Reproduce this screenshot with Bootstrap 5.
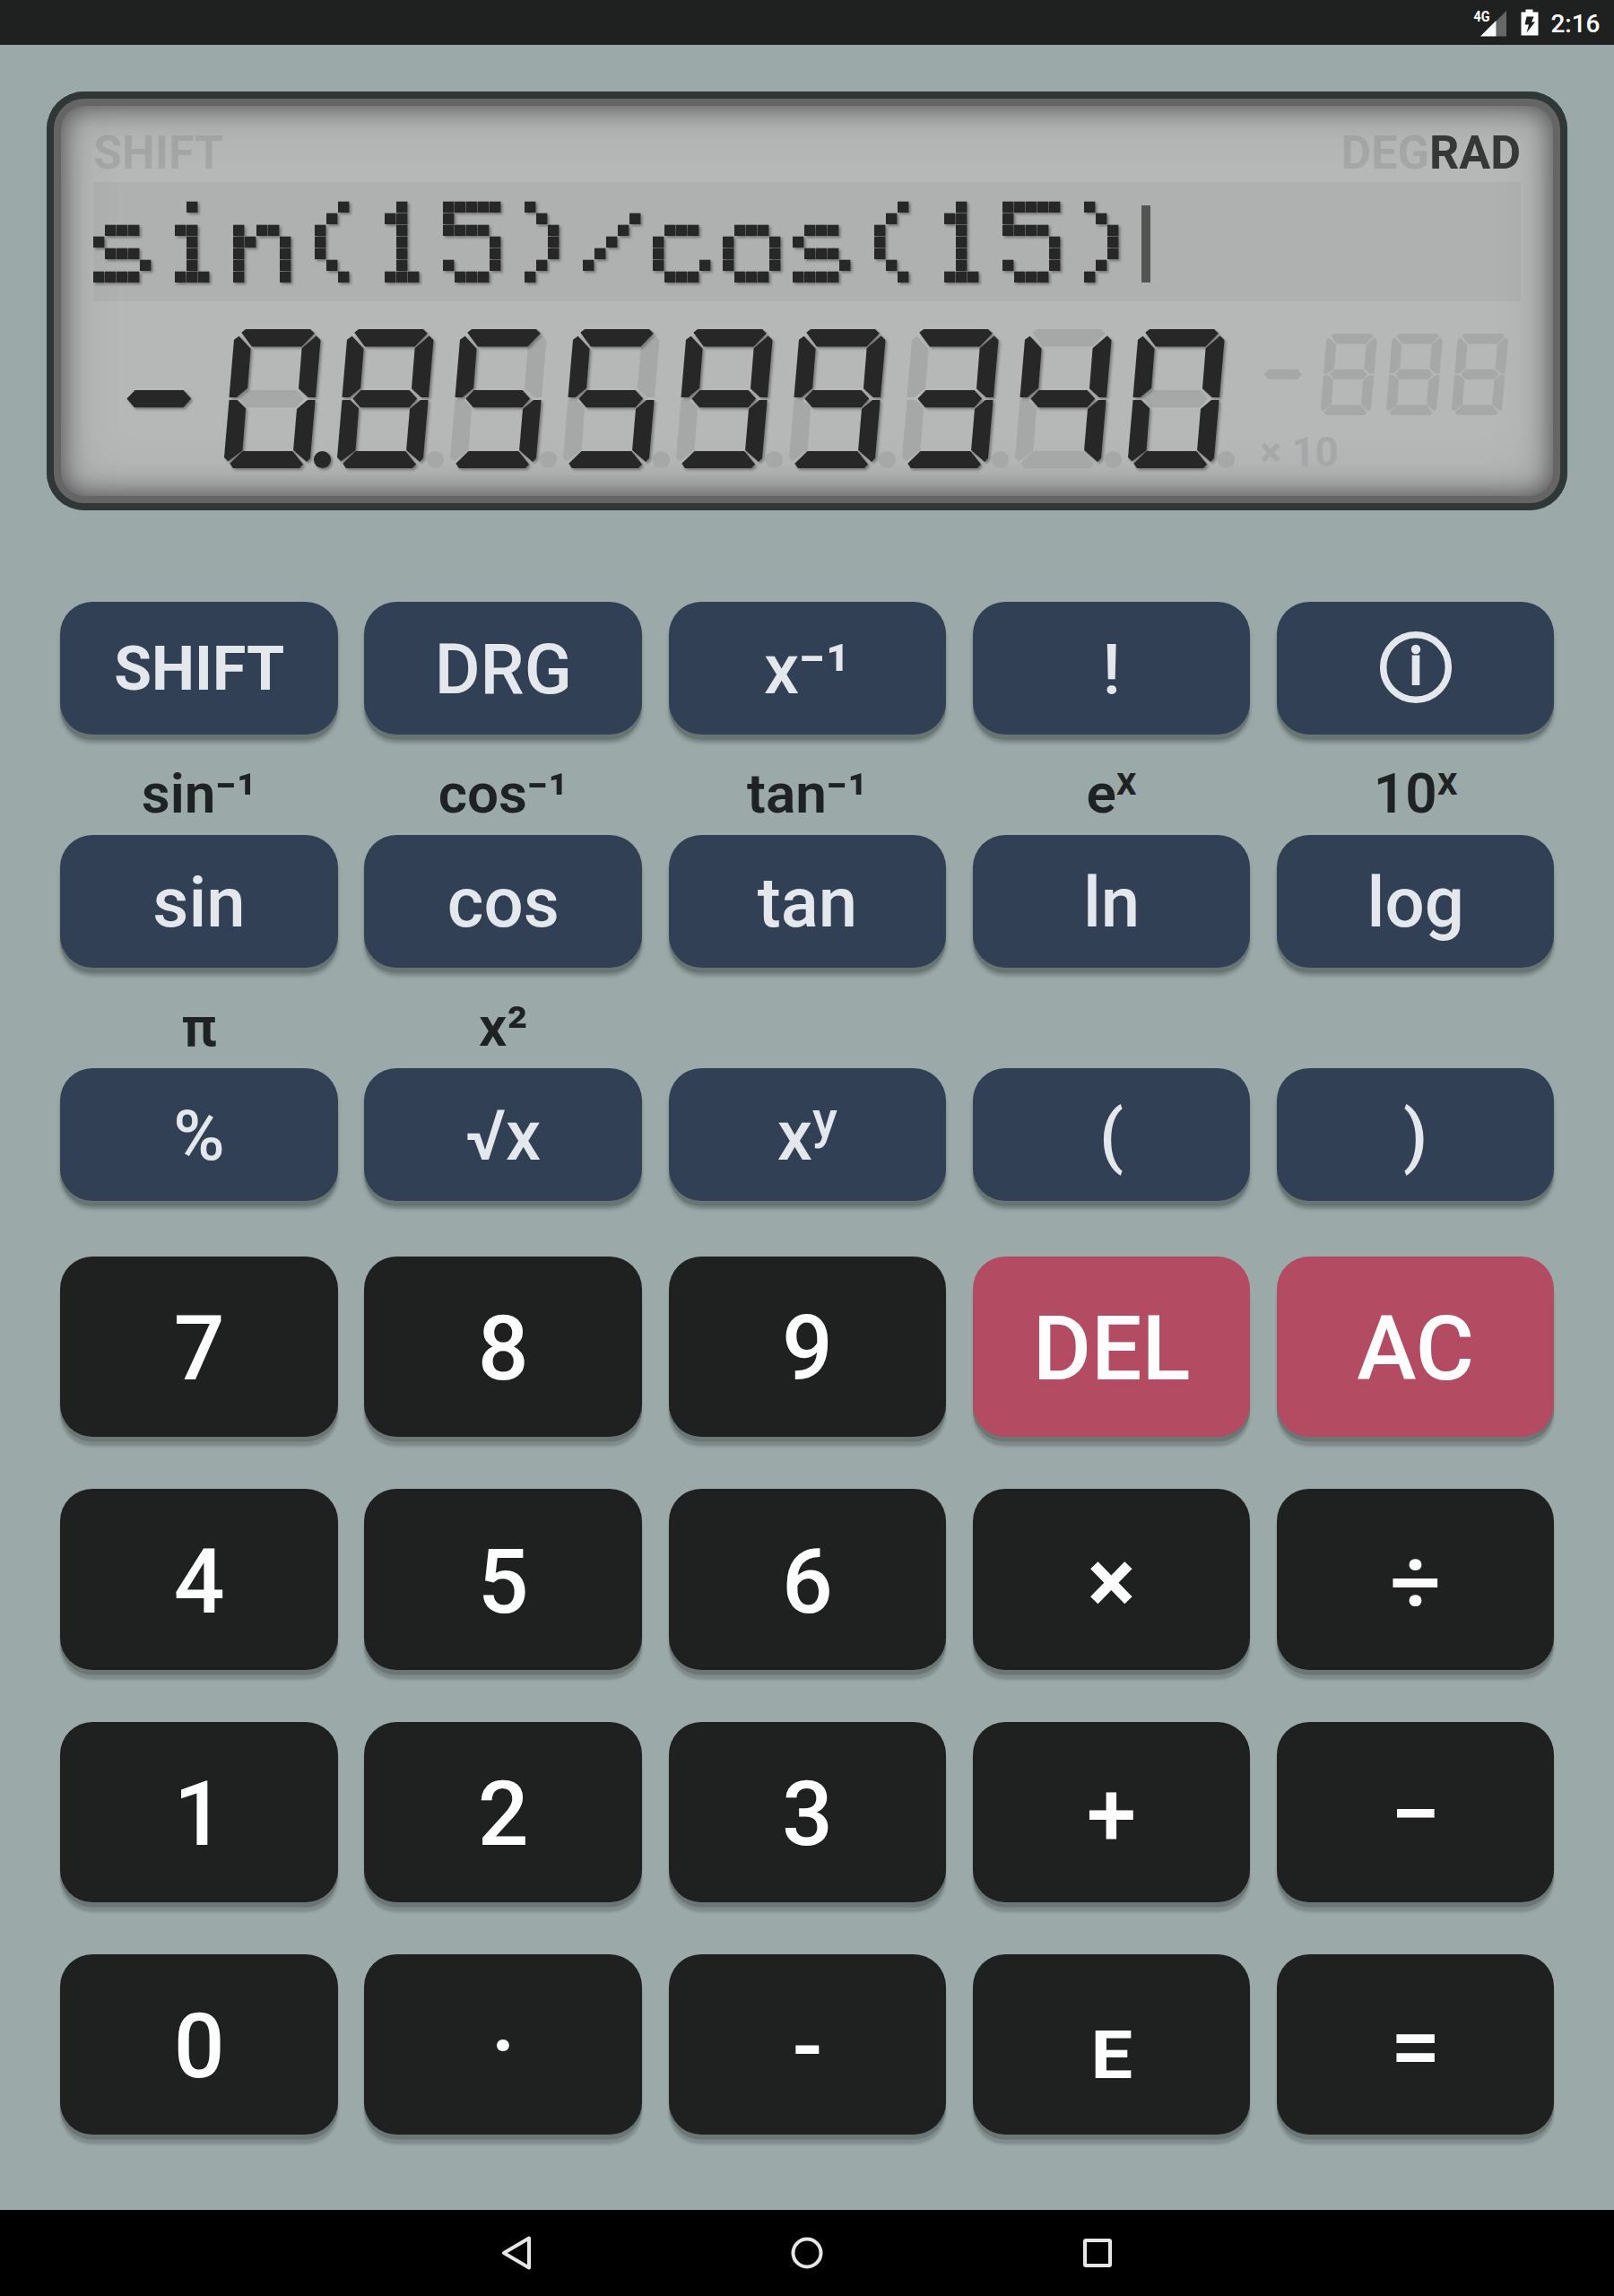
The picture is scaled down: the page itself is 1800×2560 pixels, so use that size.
<!DOCTYPE html>
<html lang="en">
<head>
<meta charset="utf-8">
<meta name="viewport" content="width=device-width, initial-scale=1">
<title>Calculator</title>
<link href="https://cdn.jsdelivr.net/npm/bootstrap@5.3.0/dist/css/bootstrap.min.css" rel="stylesheet">
<style>
  body { width: 1800px; height: 2560px; background: #9baaa9; font-family: Roboto, "Noto Sans", sans-serif; overflow: hidden; }
  .status-strip { height: 50px; background: #1f2120; color: #fff; }
  .clock { font-size: 28px; font-weight: 500; line-height: 50px; margin: 3px 15.5px 0 0; }
  .lcd { margin: 52px 52px 0; height: 467px; padding: 0 52px; border-radius: 42px; background: #b6b8b7; color: #363837;
    box-shadow: inset 0 0 0 8px #2f3737, inset 0 0 0 16px #656565, inset 0 0 28px 18px rgba(78,78,78,.95), inset 0 0 60px 26px rgba(0,0,0,.1); }
  .flags { height: 101px; font-size: 52px; font-weight: 700; line-height: 61px; padding-top: 38px; }
  .ghost { color: rgba(0,0,0,.09); }
  .entry { height: 133px; background: rgba(0,0,0,.035); }
  .result { height: 233px; }
  .result svg, .entry svg { display: block; overflow: visible; }
  .lit { fill: #272727; filter: drop-shadow(2px 2px 1.5px rgba(0,0,0,.35)); }
  .dim { fill: #a6a8a7; }
  .keypad { padding: 102px 66.5px 0 67.3px; }
  .keyrow { gap: 29.6px; }
  .keyrow > * { flex: 1 1 0; min-width: 0; }
  .key { --bs-btn-border-width: 0; padding: 4px 0 0; border: 0; border-radius: 36px; display: flex; align-items: center; justify-content: center; line-height: 1;
    font-weight: 500; }
  .key-fn { height: 147.6px; background: #324056; color: #e4e7eb; font-size: 78px; box-shadow: 0 5.5px 0 #697573, 0 8.5px 4px rgba(0,0,0,.25); }
  .key-num { height: 201.5px; padding-top: 5px; background: #1f2120; color: #fdfdfd; font-size: 100px; box-shadow: 0 5.5px 0 #6b7675, 0 11px 3px rgba(0,0,0,.18); }
  .key-red { background: #b34c62; }
  .key-shift { font-size: 68px; font-weight: 700; padding-top: 2px; }
  .key-info { padding: 0 0 1px; }
  .key-exp { font-size: 74px; font-weight: 700; padding-top: 25px; }
  .key-exp span { transform: scaleX(1.12); }
  .heavy { font-weight: 700; }
  .alt { height: 112.6px; padding-top: 20px; color: #1f2223; font-size: 62px; font-weight: 600; line-height: 92px; text-align: center; }
  .up { font-size: .73em; vertical-align: .446em; line-height: 0; }
  .numpad { gap: 57.8px; padding-top: 62px; }
  .navstrip { height: 96px; background: #000; }
</style>
</head>
<body class="d-flex flex-column">
<header class="status-strip d-flex justify-content-end align-items-center flex-shrink-0">
  <svg width="90" height="50" viewBox="1640 0 90 50" overflow="visible">
    <g transform="translate(1.500 .5)">
    <text x="1643" y="23.5" font-size="17" font-weight="700" fill="#fff" textLength="18" lengthAdjust="spacingAndGlyphs">4G</text>
    <path d="M1668 40V23L1679.500 11.500V40z" fill="#666867"/>
    <path d="M1650.500 40 1668 22.500V40z" fill="#fff"/>
    <path d="M1696 13h5v-3h8v3h6v26h-19z" fill="#fff"/>
    <path d="M1702 18h8l-2.500 6h4l-9.500 12 2.500-9h-4.500z" fill="#1f2120"/>
    </g>
  </svg>
  <span class="clock">2:16</span>
</header>

<main class="flex-grow-1">
  <section class="lcd">
    <div class="flags d-flex justify-content-between"><span class="ghost">SHIFT</span><span><span class="ghost">DEG</span>RAD</span></div>
    <div class="entry"><svg id="entry" width="1592" height="133" role="img" aria-label="sin(15)/cos(15)"></svg></div>
    <div class="result">
      <svg id="result" width="1592" height="233" viewBox="104 336 1592 233" role="img" aria-label="-0.85599340">
        <text x="1405" y="520" font-size="45.500" font-weight="700" class="dim">× 10</text>
      </svg>
    </div>
  </section>

  <section class="keypad">
    <div class="keyrow d-flex">
      <button class="btn key key-fn key-shift">SHIFT</button>
      <button class="btn key key-fn">DRG</button>
      <button class="btn key key-fn"><span>x⁻¹</span></button>
      <button class="btn key key-fn">!</button>
      <button class="btn key key-fn key-info" aria-label="Info"><svg width="82" height="82" viewBox="-41 -41 82 82" fill="#e4e7eb"><circle r="36.300" fill="none" stroke="#e4e7eb" stroke-width="7.500"/><circle cy="-20" r="5.200"/><path d="M-4.300-13.500h8.600V20h-8.600z"/></svg></button>
    </div>
    <div class="keyrow d-flex">
      <div class="alt">sin⁻¹</div><div class="alt">cos⁻¹</div><div class="alt">tan⁻¹</div>
      <div class="alt">e<span class="up">x</span></div><div class="alt">10<span class="up">x</span></div>
    </div>
    <div class="keyrow d-flex">
      <button class="btn key key-fn">sin</button><button class="btn key key-fn">cos</button><button class="btn key key-fn">tan</button><button class="btn key key-fn">ln</button><button class="btn key key-fn">log</button>
    </div>
    <div class="keyrow d-flex">
      <div class="alt">π</div><div class="alt">x²</div><div class="alt"></div><div class="alt"></div><div class="alt"></div>
    </div>
    <div class="keyrow d-flex">
      <button class="btn key key-fn">%</button><button class="btn key key-fn">√x</button><button class="btn key key-fn"><span>x<span class="up">y</span></span></button><button class="btn key key-fn">(</button><button class="btn key key-fn">)</button>
    </div>
    <div class="numpad d-flex flex-column">
      <div class="keyrow d-flex">
        <button class="btn key key-num">7</button><button class="btn key key-num">8</button><button class="btn key key-num">9</button><button class="btn key key-num key-red">DEL</button><button class="btn key key-num key-red">AC</button>
      </div>
      <div class="keyrow d-flex">
        <button class="btn key key-num">4</button><button class="btn key key-num">5</button><button class="btn key key-num">6</button><button class="btn key key-num heavy">×</button><button class="btn key key-num">÷</button>
      </div>
      <div class="keyrow d-flex">
        <button class="btn key key-num">1</button><button class="btn key key-num">2</button><button class="btn key key-num">3</button><button class="btn key key-num">+</button><button class="btn key key-num">−</button>
      </div>
      <div class="keyrow d-flex">
        <button class="btn key key-num">0</button><button class="btn key key-num">·</button><button class="btn key key-num">-</button><button class="btn key key-num key-exp"><span>E</span></button><button class="btn key key-num">=</button>
      </div>
    </div>
  </section>
</main>

<nav class="navstrip d-flex justify-content-center align-items-center flex-shrink-0" aria-label="System">
  <svg width="700" height="96" viewBox="550 2464 700 96" fill="none" stroke="#e6e6e6" stroke-width="4" stroke-linejoin="round">
    <path d="M590 2495.500v33L562 2512z"/><circle cx="900" cy="2512" r="15.500"/><rect x="1210" y="2498" width="28" height="28" rx="1"/>
  </svg>
</nav>

<script src="https://cdn.jsdelivr.net/npm/bootstrap@5.3.0/dist/js/bootstrap.bundle.min.js"></script>
<script>
  // Dot-matrix rows, one 5-bit number per row, top to bottom
  const cells = {
    s: [0, 0, 14, 16, 14, 1, 30], i: [4, 0, 12, 4, 4, 4, 14], n: [0, 0, 22, 25, 17, 17, 17],
    '(': [2, 4, 8, 8, 8, 4, 2], ')': [8, 4, 2, 2, 2, 4, 8], '1': [4, 12, 4, 4, 4, 4, 14],
    '5': [31, 16, 30, 1, 1, 17, 14], '/': [0, 1, 2, 4, 8, 16, 0], c: [0, 0, 14, 16, 16, 17, 14], o: [0, 0, 14, 17, 17, 17, 14]
  };
  let dots = '<g class="lit">';
  [...'sin(15)/cos(15)'].forEach((ch, n) => cells[ch].forEach((bits, r) => {
    for (let c = 0; c < 5; c++) if (bits & (16 >> c))
      dots += `<rect x="${n * 78 + c * 13}" y="${21.700 + r * 13}" width="12.400" height="12.300"/>`;
  }));
  document.getElementById('entry').innerHTML = dots + '</g><rect x="1169" y="26" width="10" height="86" fill="#525452"/>';

  // Seven-segment display
  const seg = {
    a: '19.3,3.7 24.1,0 96,0 100.8,4.7 86.6,19.5 30.8,19.5',
    b: '102.8,7.3 107.5,12.3 102,76 93.7,76 83,66.3 86.6,21.3',
    c: '92.9,79 101.600,79 96,143.7 92.1,148 77.1,135 81,89',
    d: '20.5,136 76.3,136 88.1,150.7 83.8,155 9.8,155 6.3,149.7',
    e: '5.5,79 14.6,79 24.1,88.3 20.5,135.3 4.3,147.3 0,143',
    f: '16.6,7.7 29.6,21.7 26.1,65.7 13.8,76 5.5,76 11,11.7',
    g: '17.4,77.5 26.500,68 80.6,68 89.2,77.5 80.6,87.3 25.8,87.3'
  };
  const on = { '0': 'abcdef', '3': 'abcdg', '4': 'bcfg', '5': 'acdfg', '8': 'abcdefg', '9': 'abcdfg' };
  const digit = (x, names, cls) => `<g transform="translate(${x} 367)" class="${cls}">` +
    [...names].map(k => k === '.' ? '<circle cx="109.500" cy="145.500" r="9.600"/>' : `<polygon points="${seg[k]}"/>`).join('') + '</g>';
  let out = digit(124, 'g', 'lit');
  [...'085599340'].forEach((d, n) => {
    const x = 250 + n * 126, lit = on[d] + (n === 0 ? '.' : '');
    out += digit(x, [...'abcdefg.'].filter(k => !lit.includes(k)), 'dim') + digit(x, lit, 'lit');
  });
  out += '<g transform="translate(1399.700 157.300) scale(.585)">' + digit(0, 'g', 'dim') + [125, 250, 375].map(x => digit(x, 'abcdefg', 'dim')).join('') + '</g>';
  document.getElementById('result').insertAdjacentHTML('beforeend', out);
</script>
</body>
</html>
